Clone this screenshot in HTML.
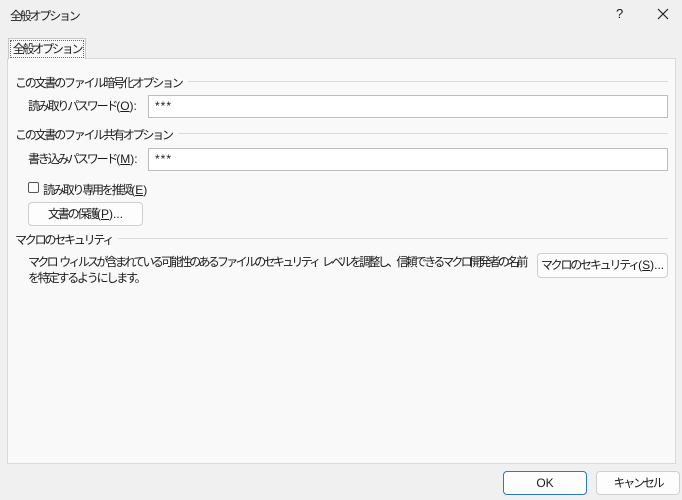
<!DOCTYPE html>
<html><head><meta charset="utf-8"><style>
*{box-sizing:border-box;margin:0;padding:0}
body{width:682px;height:500px;background:#f0f0f0;font-family:"Liberation Sans","Noto Sans CJK JP",sans-serif;font-size:12px;color:#1a1a1a;position:relative;overflow:hidden;letter-spacing:-2.2px}
b{font-weight:normal;letter-spacing:0}
.a{position:absolute;white-space:nowrap}
.panel{position:absolute;left:7px;top:58px;width:669px;height:406px;background:#f9f9f9;border:1px solid #d9d9d9}
.tab{position:absolute;left:8px;top:38px;width:78px;height:21px;background:#f9f9f9;border:1px solid #c8c8c8;border-bottom:none;text-align:center;line-height:20px;white-space:nowrap}
.tabin{position:absolute;left:10px;top:40px;width:74px;height:18px;border:1px dotted #666}
.line{position:absolute;height:1px;background:#dcdcdc;right:14px}
.hd{background:#f9f9f9;padding-right:6px}
.inp{position:absolute;background:#fff;border:1px solid #bdbdbd;height:23px;padding-left:6px;line-height:21px;letter-spacing:1px}
.btn{position:absolute;background:#fdfdfd;border:1px solid #cfcfcf;border-radius:4px;text-align:center;line-height:22px;white-space:nowrap}
</style></head><body>
<div class="a" style="left:10px;top:7px">全般オプション</div>
<div class="a" style="left:616px;top:6px;font-size:13px">?</div>
<svg class="a" style="left:657px;top:8px" width="12" height="12"><path d="M1 1L11 11M11 1L1 11" stroke="#222" stroke-width="1.2"/></svg>
<div class="panel"></div>
<div class="tab">全般オプション</div>
<div class="tabin"></div>
<div class="line" style="left:15px;top:81px"></div>
<div class="a hd" style="left:15px;top:74px">この文書のファイル暗号化オプション</div>
<div class="a" style="left:28px;top:97px">読み取りパスワード<b>(<u>O</u>):</b></div>
<div class="inp" style="left:148px;top:95px;width:520px">***</div>
<div class="line" style="left:15px;top:133px"></div>
<div class="a hd" style="left:15px;top:126px">この文書のファイル共有オプション</div>
<div class="a" style="left:28px;top:150px">書き込みパスワード<b>(<u>M</u>):</b></div>
<div class="inp" style="left:148px;top:148px;width:520px">***</div>
<div class="a" style="left:28px;top:182px;width:11px;height:11px;border:1px solid #555;border-radius:2px;background:#fff"></div>
<div class="a" style="left:43px;top:181px">読み取り専用を推奨<b>(<u>E</u>)</b></div>
<div class="btn" style="left:28px;top:202px;width:115px;height:24px">文書の保護<b>(<u>P</u>)...</b></div>
<div class="line" style="left:15px;top:238px"></div>
<div class="a hd" style="left:15px;top:231px">マクロのセキュリティ</div>
<div class="a" style="left:28px;top:253px;letter-spacing:-2.7px">マクロ<b> </b>ウィルスが含まれている可能性のあるファイルのセキュリティ<b> </b>レベルを調整し、信頼できるマクロ開発者の名前</div>
<div class="a" style="left:28px;top:269px">を特定するようにします。</div>
<div class="btn" style="left:537px;top:253px;width:131px;height:25px;line-height:23px">マクロのセキュリティ<b>(<u>S</u>)...</b></div>
<div class="btn" style="left:503px;top:471px;width:84px;height:24px;border:1px solid #2a78c8;letter-spacing:0">OK</div>
<div class="btn" style="left:596px;top:471px;width:84px;height:24px">キャンセル</div>
</body></html>
